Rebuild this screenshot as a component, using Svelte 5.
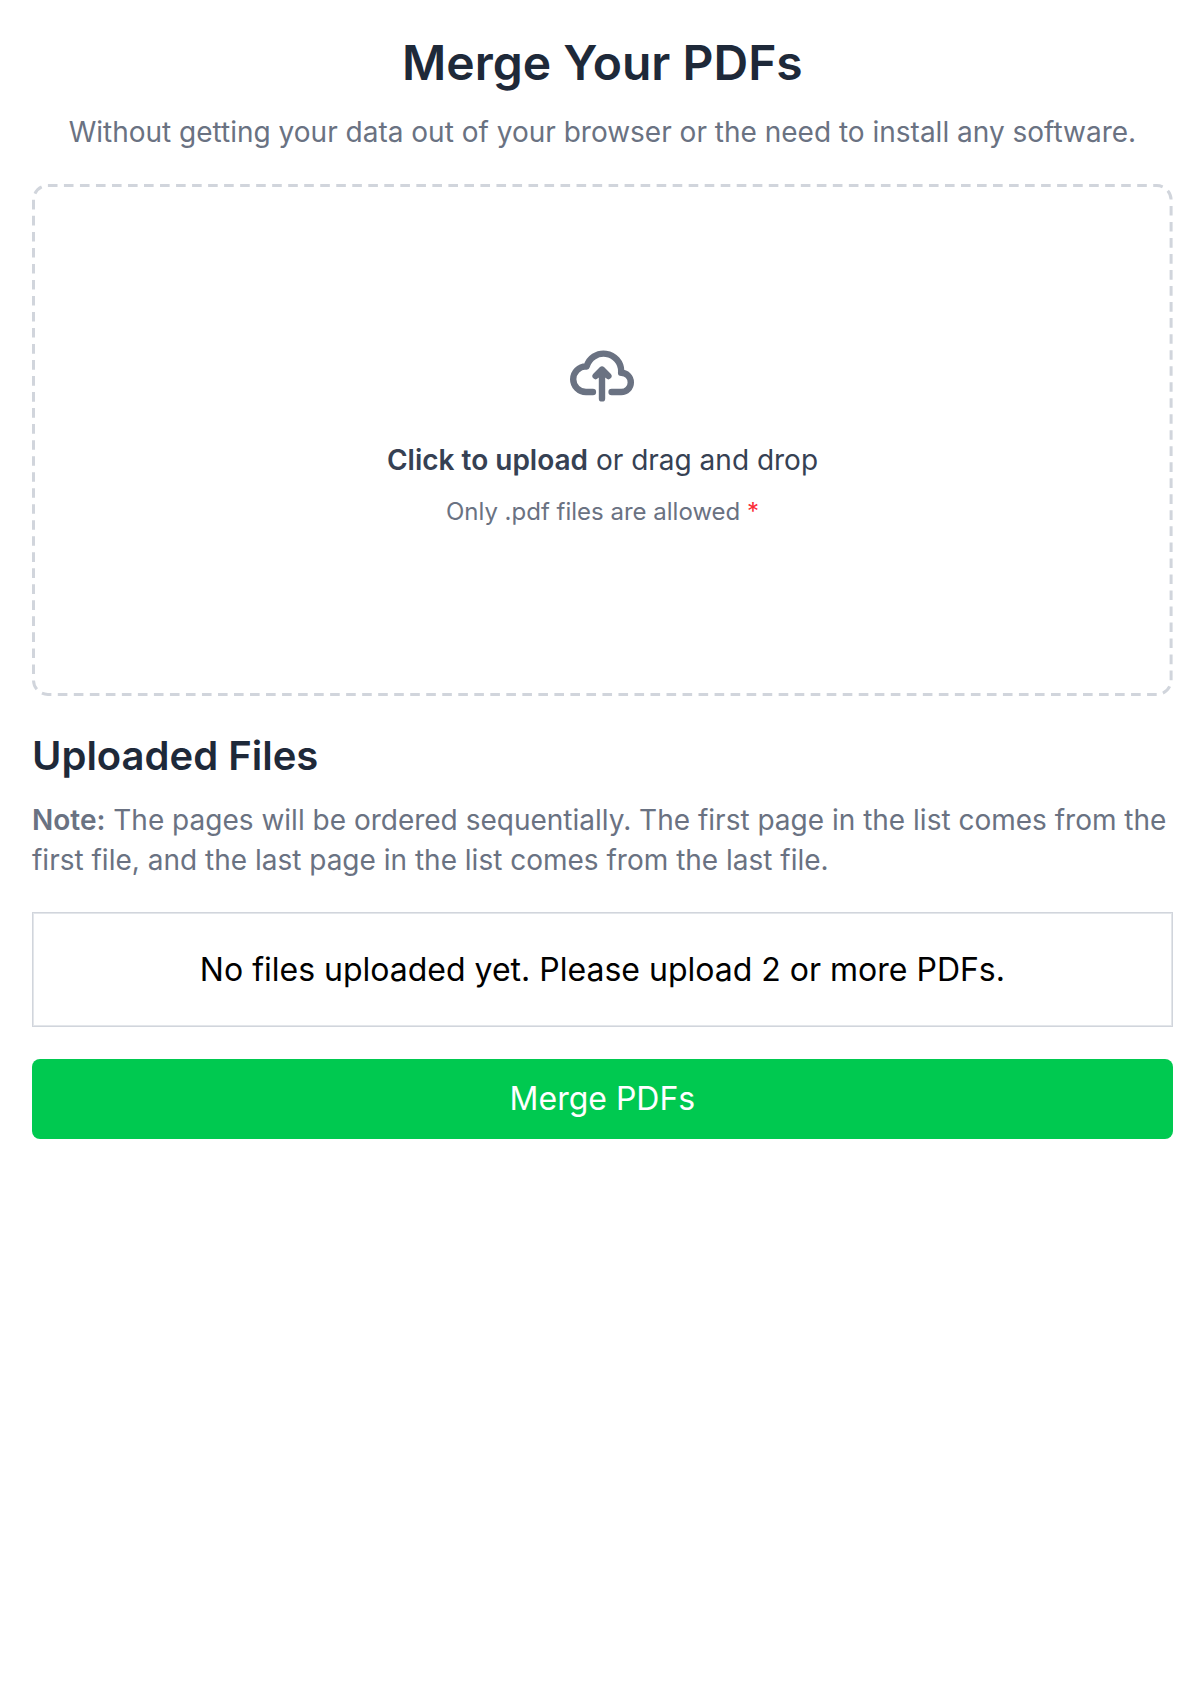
<script>
  let files = $state([]);
</script>

<main class="page">
  <header class="intro">
    <h1>Merge Your PDFs</h1>
    <p>Without getting your data out of your browser or the need to install any software.</p>
  </header>

  <label class="dropzone">
    <svg class="outline" viewBox="0 0 1141 512" fill="none" aria-hidden="true">
      <rect x="1.5" y="1.5" width="1137.6" height="509" rx="14.4" pathLength="3264" />
    </svg>
    <span class="prompt">
      <svg class="cloud" viewBox="0 0 20 16" fill="none" aria-hidden="true">
        <path d="M13 13h3a3 3 0 0 0 0-6h-.025A5.56 5.56 0 0 0 16 6.5 5.5 5.5 0 0 0 5.207 5.021C5.137 5.017 5.071 5 5 5a4 4 0 0 0 0 8h2.167M10 15V6m0 0L8 8m2-2 2 2" />
      </svg>
      <span class="action"><b>Click to upload</b> or drag and drop</span>
      <span class="hint">Only .pdf files are allowed <i>*</i></span>
    </span>
    <input type="file" accept=".pdf" multiple hidden onchange={(e) => (files = [...e.currentTarget.files])} />
  </label>

  <section class="uploads">
    <h2>Uploaded Files</h2>
    <p class="note">
      <b>Note:</b> The pages will be ordered sequentially. The first page in the list comes from the first file, and the last page in the list comes from the last file.
    </p>
    <div class="list">
      {#each files as file}
        <div>{file.name}</div>
      {:else}
        No files uploaded yet. Please upload 2 or more PDFs.
      {/each}
    </div>
  </section>

  <button type="button">Merge PDFs</button>
</main>

<style>
  :global(body) {
    background: #fff;
  }
  .page {
    box-sizing: border-box;
    display: flex;
    flex-direction: column;
    gap: 32px;
    padding: 32px 31.2px 32px 32px;
    font-family: Inter, sans-serif;
    font-size: 32px;
    line-height: 48px;
    color: #000;
  }
  h1, h2, p {
    margin: 0;
  }
  h1, h2, b {
    font-weight: 600;
  }
  h1, h2 {
    color: #1e2939;
  }
  .intro {
    text-align: center;
  }
  h1 {
    font-size: 48px;
    line-height: 62px;
    margin-bottom: 18px;
  }
  p {
    font-size: 28px;
    line-height: 40px;
    color: #6a7282;
  }
  .dropzone {
    display: grid;
    height: 512px;
    cursor: pointer;
  }
  .outline, .prompt {
    grid-area: 1 / 1;
  }
  .outline {
    width: 1141px;
    height: 512px;
  }
  .outline rect {
    stroke: #d1d5dc;
    stroke-width: 3;
    stroke-dasharray: 9.6 6.4;
  }
  .prompt {
    display: flex;
    flex-direction: column;
    align-items: center;
    justify-content: center;
    padding-bottom: 8px;
  }
  .cloud {
    width: 64px;
    height: 64px;
    margin: 0 1px 32px 0;
  }
  .cloud path {
    stroke: #6a7282;
    stroke-width: 2;
    stroke-linecap: round;
    stroke-linejoin: round;
  }
  .action {
    font-size: 28px;
    line-height: 40px;
    margin-bottom: 16px;
    color: #364153;
  }
  .hint {
    font-size: 24px;
    line-height: 32px;
    color: #6a7282;
  }
  .hint i {
    font-style: normal;
    color: #fb2c36;
  }
  h2 {
    font-size: 40px;
    line-height: 56px;
    margin-bottom: 16px;
  }
  .note {
    margin-bottom: 32px;
  }
  .list {
    box-sizing: border-box;
    min-height: 115px;
    border: 1px solid #d1d5dc;
    box-shadow: inset 0 0 0 1px #e3e6ea;
    padding: 33px 32px 32px;
    text-align: center;
  }
  button {
    height: 80px;
    padding: 0;
    border: 0;
    border-radius: 8px;
    background: #00c950;
    color: #fff;
    font: inherit;
    cursor: pointer;
  }
</style>
